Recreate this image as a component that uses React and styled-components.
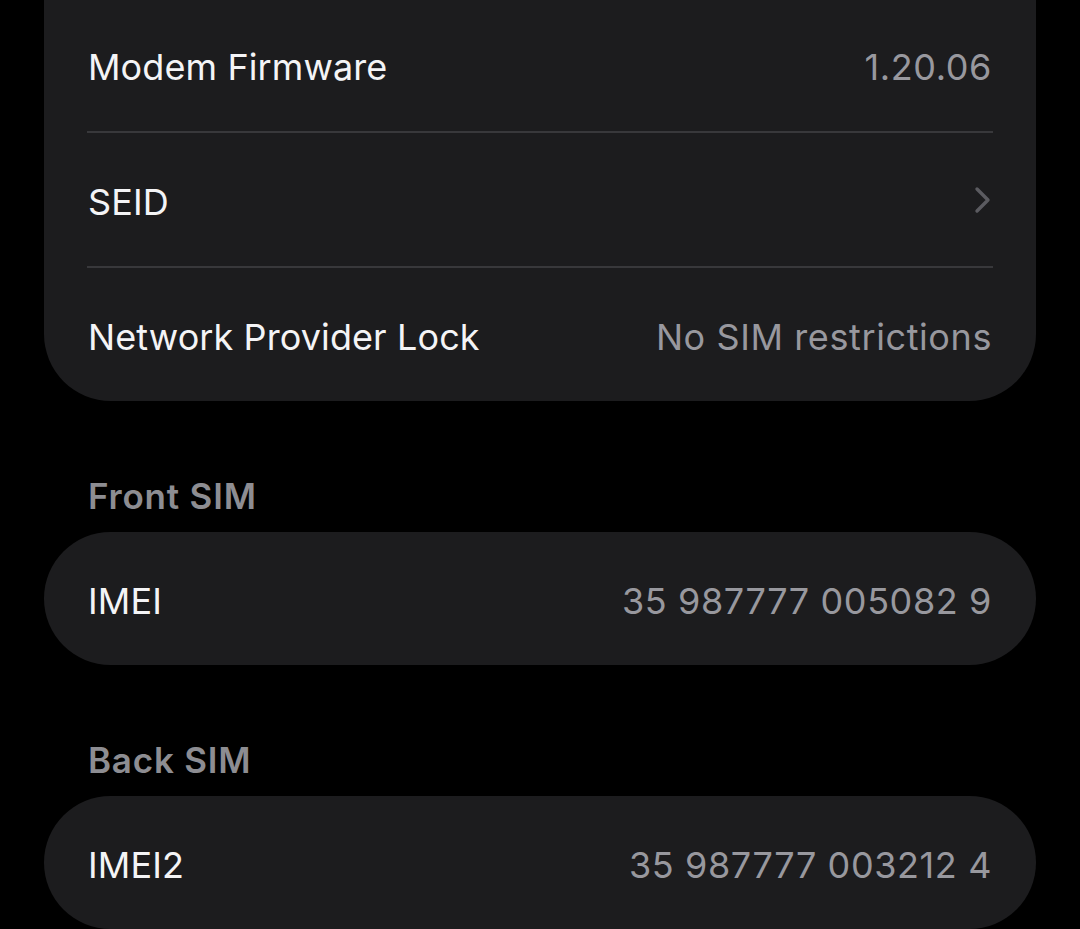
import React from "react";
import styled, { createGlobalStyle } from "styled-components";

const GlobalStyle = createGlobalStyle`
  html, body {
    margin: 0;
    padding: 0;
    background: #000;
  }
  body {
    font-family: Inter, "Noto Sans", "Liberation Sans", sans-serif;
    -webkit-font-smoothing: antialiased;
  }
`;

function Chevron() {
  return (
    <ChevronIcon viewBox="0 0 18 28" fill="none">
      <path
        d="M3 3 L14 14 L3 25"
        stroke="#5b5b60"
        strokeWidth="3.4"
        strokeLinecap="round"
        strokeLinejoin="round"
      />
    </ChevronIcon>
  );
}

function Row({ label, value, chevron }) {
  return (
    <RowWrap>
      <Label>{label}</Label>
      {value && <Value>{value}</Value>}
      {chevron && <Chevron />}
    </RowWrap>
  );
}

export default function App() {
  return (
    <>
      <GlobalStyle />
      <Page>
        <Card $top>
          <Row label="Modem Firmware" value="1.20.06" />
          <Divider />
          <Row label="SEID" chevron />
          <Divider />
          <Row label="Network Provider Lock" value="No SIM restrictions" />
        </Card>

        <SectionHeader>Front SIM</SectionHeader>
        <Card>
          <Row label="IMEI" value="35 987777 005082 9" />
        </Card>

        <SectionHeader>Back SIM</SectionHeader>
        <Card>
          <Row label="IMEI2" value="35 987777 003212 4" />
        </Card>
      </Page>
    </>
  );
}

const Page = styled.div`
  height: 929px;
  overflow: hidden;
  padding: 0 44px;
  box-sizing: border-box;
`;

const Card = styled.div`
  background: #1c1c1e;
  border-radius: 67px;
  margin-top: ${(p) => (p.$top ? "-2px" : "0")};
  border-top-left-radius: ${(p) => (p.$top ? "0" : "67px")};
  border-top-right-radius: ${(p) => (p.$top ? "0" : "67px")};
  overflow: hidden;
`;

const RowWrap = styled.div`
  height: 133px;
  box-sizing: border-box;
  padding: 4px 44px 0;
  display: flex;
  align-items: center;
  justify-content: space-between;
`;

const Label = styled.span`
  color: #f4f4f6;
  font-size: 36px;
  font-weight: 400;
  letter-spacing: 0.1px;
`;

const Value = styled.span`
  color: #98989e;
  font-size: 36px;
  font-weight: 400;
  letter-spacing: 0.6px;
`;

const ChevronIcon = styled.svg`
  width: 18px;
  height: 28px;
  margin-top: -4px;
`;

const Divider = styled.div`
  height: 2px;
  margin: 0 43px;
  background: #38383b;
`;

const SectionHeader = styled.div`
  color: #8d8d92;
  font-size: 35px;
  font-weight: 600;
  letter-spacing: 0.8px;
  line-height: 40px;
  padding: 75px 44px 16px;
`;
